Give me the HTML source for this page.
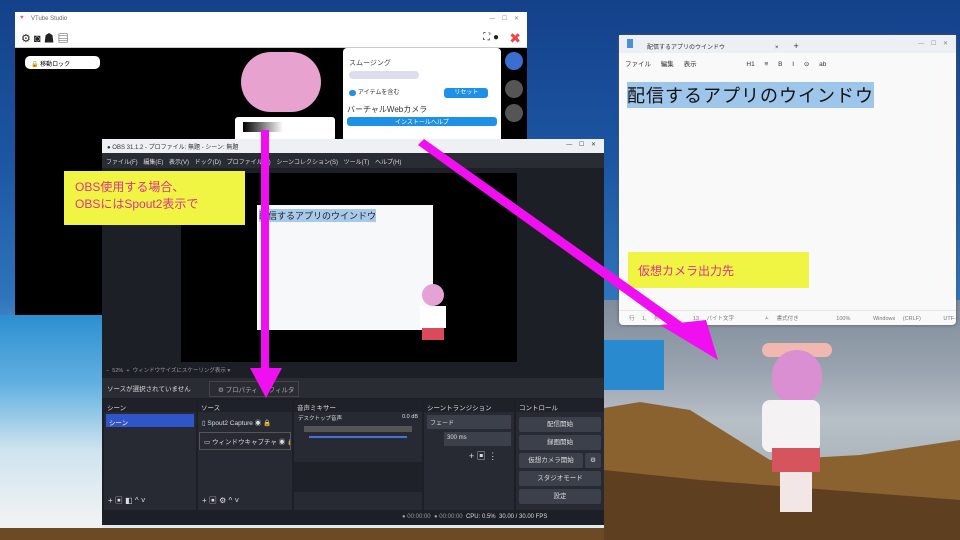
<!DOCTYPE html><html><head><meta charset="utf-8"><style>
*{margin:0;padding:0;box-sizing:border-box}
body{width:960px;height:540px;overflow:hidden;position:relative;font-family:"Liberation Sans","Noto Sans CJK JP",sans-serif;font-size:7px;
background:linear-gradient(180deg,#14418a 0%,#1c56a3 30%,#2f74bb 55%,#6fa6d3 70%,#c9dbe8 90%,#e8eef2 100%)}
.a{position:absolute}
.t{white-space:nowrap}
.dock{position:absolute;background:#272a33;top:400px;height:110px}
.dh{height:12px;background:#1f2128;color:#ddd;padding:2px 3px;font-size:6.5px}
.btn{position:absolute;background:#3c404b;color:#ddd;font-size:6.5px;text-align:center;line-height:15px;height:15px;border-radius:2px}
</style></head><body>
<!-- background -->
<div class="a" style="left:0;top:315px;width:102px;height:225px;background:linear-gradient(180deg,#2d8fd0,#5fb0e0 30%,#cfe3ef 60%,#eef2f4 90%)"></div>
<div class="a" style="left:0;top:528px;width:604px;height:12px;background:#6b4a25"></div>
<div class="a" style="left:604px;top:300px;width:356px;height:240px;background:linear-gradient(180deg,#7f8c9a,#9aa4b0 30%,#b7bfc7 50%,#9ca3aa)"></div>
<div class="a" style="left:604px;top:340px;width:60px;height:50px;background:#2a8ad0"></div>
<svg class="a" style="left:0;top:0" width="960" height="540"><path d="M604 408 L640 402 L690 410 L770 460 L860 455 L960 440 L960 540 L604 540Z" fill="#8a6230"/><path d="M604 470 L700 480 L960 500 L960 540 L604 540Z" fill="#5e3f1f"/></svg>
<!-- VTube Studio -->
<div class="a" style="left:15px;top:12px;width:512px;height:303px;background:#000">
 <div style="height:16px;background:#fff;color:#666;padding:4px 0 0 16px;font-size:6px">VTube Studio<span class="a" style="right:8px;top:3px;color:#888">—&nbsp;&nbsp;&nbsp;&nbsp;☐&nbsp;&nbsp;&nbsp;&nbsp;✕</span><span class="a" style="left:5px;top:3px;color:#e57">♥</span></div>
 <div style="height:20px;background:#fff;border-bottom:1px solid #ccc;font-size:11px;padding:2px 6px;color:#222">⚙ ◙ ☗ ▤<span class="a" style="right:6px;top:18px;color:#e44;font-size:14px">✖</span><span class="a" style="right:28px;top:20px;font-size:10px">⛶ ●</span></div>
 <div class="a" style="left:10px;top:44px;width:75px;height:13px;background:#fff;border-radius:5px;font-size:6px;padding:3px 6px">🔒 移動ロック</div>
 <div class="a" style="left:226px;top:40px;width:80px;height:60px;border-radius:30px;background:#e7a2d0"></div>
 <div class="a" style="left:220px;top:105px;width:100px;height:33px;background:#fff;border-radius:3px"><div class="a" style="left:8px;top:5px;width:40px;height:10px;background:linear-gradient(90deg,#000,#fff)"></div><div class="a" style="left:8px;top:22px;width:45px;height:10px;background:#d33"></div></div>
 <div class="a" style="left:328px;top:36px;width:158px;height:62px;background:#fff;border-radius:4px;font-size:7px;padding:10px 6px;color:#444">スムージング<div style="margin-top:3px;width:70px;height:8px;background:#dde;border-radius:4px"></div><div style="margin-top:8px;color:#333;font-size:6px"><span style="background:#1e90e8;border-radius:4px;color:#1e90e8">●●</span> アイテムを含む<span style="background:#1e90e8;color:#fff;padding:2px 10px;border-radius:3px;margin-left:45px">リセット</span></div></div>
 <div class="a" style="left:328px;top:90px;width:158px;height:40px;background:#fff;border-radius:4px;padding:2px 4px;font-size:8px;color:#333">バーチャルWebカメラ<div style="background:#1e90e8;color:#fff;height:9px;border-radius:3px;font-size:6px;text-align:center;margin-top:2px">インストールヘルプ</div></div>
 <div class="a" style="left:490px;top:40px;width:18px;height:18px;border-radius:9px;background:#3a6fd0"></div>
 <div class="a" style="left:490px;top:68px;width:18px;height:18px;border-radius:9px;background:#555"></div>
 <div class="a" style="left:490px;top:92px;width:18px;height:18px;border-radius:9px;background:#555"></div>
</div>
<!-- OBS -->
<div class="a" style="left:102px;top:139px;width:502px;height:386px;background:#1d1f26">
 <div style="height:14px;background:#eef0f4;color:#333;font-size:6px;padding:3px 5px">● OBS 31.1.2 - プロファイル: 無題 - シーン: 無題<span class="a" style="right:8px;top:2px;color:#444">—&nbsp;&nbsp;&nbsp;&nbsp;☐&nbsp;&nbsp;&nbsp;&nbsp;✕</span></div>
 <div style="height:15px;background:#2a2c33;color:#ddd;font-size:6px;padding:4px 4px;word-spacing:4px">ファイル(F) 編集(E) 表示(V) ドック(D) プロファイル(P) シーンコレクション(S) ツール(T) ヘルプ(H)</div>
 <div class="a" style="left:79px;top:34px;width:336px;height:189px;background:#000"></div>
 <div class="a" style="left:155px;top:66px;width:176px;height:125px;background:#f7f8fa"><span class="t a" style="left:2px;top:4px;font-size:9px;background:#a7c9ea;color:#222">配信するアプリのウインドウ</span></div>
 <div class="a" style="left:320px;top:145px;width:22px;height:22px;border-radius:11px;background:#e5a3d5"></div>
 <div class="a" style="left:318px;top:167px;width:26px;height:22px;background:#fff"></div>
 <div class="a" style="left:320px;top:189px;width:22px;height:12px;background:#d94a5a"></div>
 <div class="a t" style="left:4px;top:227px;color:#999;font-size:5.5px">−&nbsp; 52% &nbsp;+ &nbsp;ウィンドウサイズにスケーリング表示 ▾</div>
 <div class="a" style="left:0;top:239px;width:502px;height:20px;background:#2a2c33;color:#ddd;font-size:6.5px;padding:5px 5px">ソースが選択されていません<span class="a t" style="left:107px;top:3px;border:1px solid #444;padding:2px 8px;width:90px;color:#aaa">⚙ プロパティ &nbsp;&nbsp;&nbsp;&nbsp;&nbsp;フィルタ</span></div>
</div>
<div class="dock" style="left:104px;width:92px"><div class="dh">シーン</div><div style="background:#2f55c8;color:#fff;height:13px;margin:2px;padding:3px;font-size:6.5px">シーン</div><div class="a" style="bottom:4px;left:4px;color:#ddd;font-size:8px">+ ▣ ◧ ^ ˅</div></div>
<div class="dock" style="left:198px;width:94px"><div class="dh">ソース</div><div class="t" style="color:#ddd;padding:5px 4px;font-size:6.5px">▯ Spout2 Capture ◉ 🔒</div><div class="t" style="color:#ddd;padding:3px 4px;font-size:6.5px;border:1px solid #555;margin:0 1px;overflow:hidden">▭ ウィンドウキャプチャ ◉ 🔒</div><div class="a" style="bottom:4px;left:4px;color:#ddd;font-size:8px">+ ▣ ⚙ ^ ˅</div></div>
<div class="dock" style="left:294px;width:128px"><div class="dh">音声ミキサー</div><div style="color:#ddd;padding:2px 4px;font-size:5.5px">デスクトップ音声<span style="float:right">0.0 dB</span></div><div style="margin:2px 10px;height:6px;background:#555"></div><div style="margin:4px 15px;height:2px;background:#4a6fe0"></div><div class="a" style="left:0;top:62px;width:128px;height:30px;background:#1f2128"></div></div>
<div class="dock" style="left:424px;width:90px"><div class="dh">シーントランジション</div><div style="margin:3px;height:14px;background:#3c404b;color:#ddd;padding:3px;font-size:6px">フェード</div><div style="margin:3px 3px 3px 20px;height:14px;background:#3c404b;color:#ddd;padding:3px;font-size:6px">300 ms</div><div style="color:#ddd;padding-left:45px;font-size:9px">+ ▣ ⋮</div></div>
<div class="dock" style="left:516px;width:88px"><div class="dh">コントロール</div>
<div class="btn" style="left:3px;top:17px;width:82px">配信開始</div><div class="btn" style="left:3px;top:35px;width:82px">録画開始</div><div class="btn" style="left:3px;top:53px;width:64px">仮想カメラ開始</div><div class="btn" style="left:69px;top:53px;width:16px">⚙</div><div class="btn" style="left:3px;top:71px;width:82px">スタジオモード</div><div class="btn" style="left:3px;top:89px;width:82px">設定</div></div>
<div class="a t" style="left:102px;top:510px;width:502px;height:15px;background:#1d1f26;color:#999;font-size:6px;padding:4px 10px 0 300px">● 00:00:00 &nbsp;● 00:00:00 &nbsp;<span style="color:#ddd">CPU: 0.5% &nbsp;30.00 / 30.00 FPS</span></div>
<!-- Notepad -->
<div class="a" style="left:619px;top:35px;width:337px;height:290px;background:#f9f9f9;border-radius:4px;box-shadow:0 0 3px #555">
 <div style="height:18px;background:#eceff3;font-size:6px;padding:6px 0 0 28px;color:#333">配信するアプリのウインドウ<span style="margin-left:50px">×</span><span style="margin-left:15px;font-size:9px">+</span><span class="a" style="right:8px;top:5px;color:#888">—&nbsp;&nbsp;&nbsp;&nbsp;☐&nbsp;&nbsp;&nbsp;&nbsp;✕</span><span class="a" style="left:8px;top:4px;width:6px;height:9px;background:#4a90d9"></span></div>
 <div style="height:18px;font-size:6.5px;padding:5px 6px;color:#333;word-spacing:8px">ファイル 編集 表示 <span style="margin-left:40px">H1 ≡ B I ⊝ ab</span></div>
 <div class="a t" style="left:8px;top:47px;font-size:18px;background:#9ec6ea;color:#111;letter-spacing:1px">配信するアプリのウインドウ</div>
 <div class="a t" style="left:0;top:275px;width:337px;font-size:5.5px;color:#777;padding:3px 10px;word-spacing:6px;border-top:1px solid #e6e6e6">行 1, 列 1 &nbsp; 13 バイト文字 &nbsp;&nbsp; ㅅ 書式付き &nbsp;&nbsp;&nbsp; 100% &nbsp; Windows (CRLF) &nbsp; UTF-8</div>
</div>
<div class="a t" style="left:628px;top:252px;width:181px;height:36px;background:#f0f544;color:#e0318a;font-size:12px;padding:10px 0 0 10px">仮想カメラ出力先</div>
<div class="a" style="left:64px;top:171px;width:181px;height:54px;background:#f0f544;color:#e0318a;font-size:12px;line-height:17px;padding:8px 0 0 11px">OBS使用する場合、<br>OBSにはSpout2表示で</div>
<!-- character right -->
<div class="a" style="left:762px;top:343px;width:70px;height:14px;border-radius:7px;background:#f0b8b0"></div>
<div class="a" style="left:772px;top:350px;width:50px;height:55px;border-radius:25px;background:#d98fd2"></div>
<div class="a" style="left:762px;top:400px;width:58px;height:52px;background:#f4f2f2;border-radius:8px"></div>
<div class="a" style="left:772px;top:448px;width:48px;height:24px;background:#d6545e"></div>
<div class="a" style="left:780px;top:472px;width:32px;height:40px;background:#f3e6e6"></div>
<!-- arrows -->
<svg class="a" style="left:0;top:0" width="960" height="540"><g fill="#f00ff0"><rect x="261" y="130" width="8" height="240"/><polygon points="250,368 282,368 266,398"/><polygon points="418,145 424,139 690,328 684,336"/><polygon points="660,325 706,320 718,360"/></g></svg>
</body></html>
